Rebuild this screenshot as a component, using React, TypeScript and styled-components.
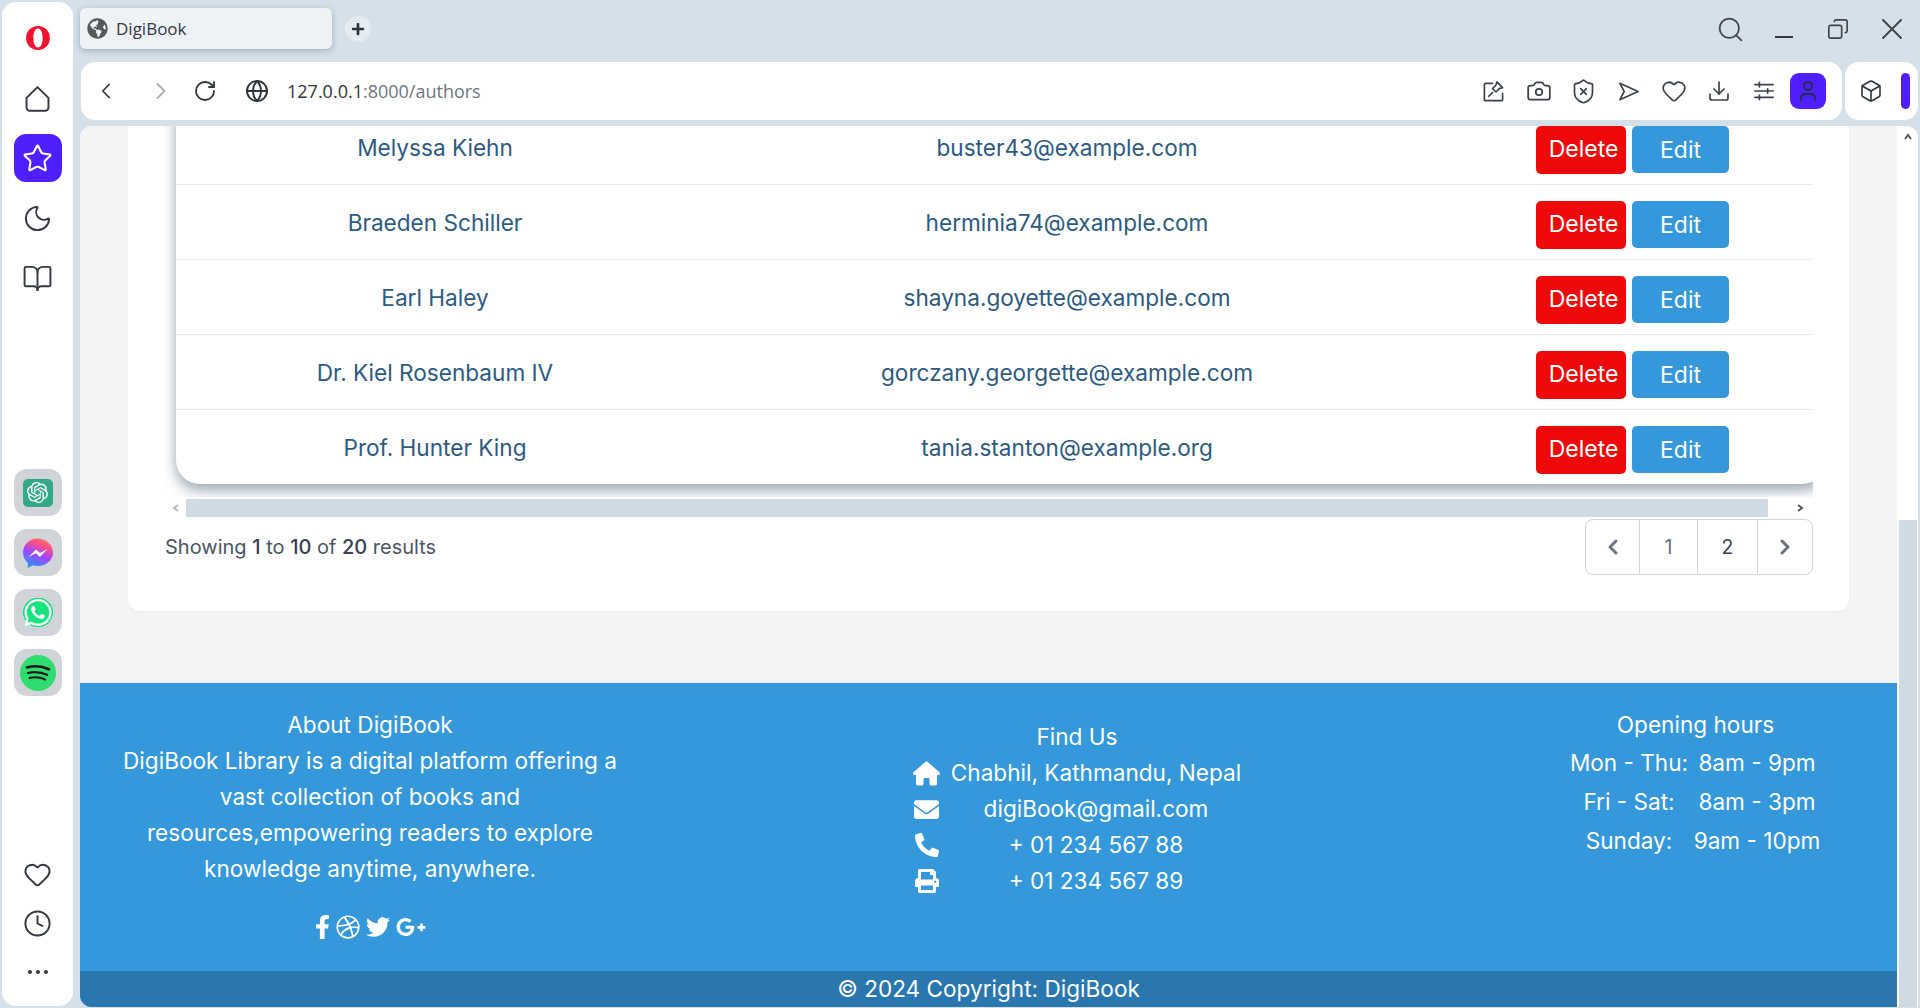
import styled, { createGlobalStyle } from 'styled-components';
import {
  Box,
  BookOpen,
  Camera,
  ChevronLeft,
  ChevronRight,
  Clock,
  Copy,
  Download,
  Globe,
  Heart,
  Moon,
  RotateCw,
  Search,
  ShieldX,
  Star,
  User,
  X,
} from 'lucide-react';
import {
  FaDribbble,
  FaEnvelope,
  FaFacebookF,
  FaGlobeAmericas,
  FaGooglePlusG,
  FaPhoneAlt,
  FaPlus,
  FaPrint,
  FaTwitter,
  FaWhatsapp,
} from 'react-icons/fa';
import { FaHouse } from 'react-icons/fa6';
import { SiOpenai } from 'react-icons/si';

const authors = [
  { name: 'Melyssa Kiehn', email: 'buster43@example.com' },
  { name: 'Braeden Schiller', email: 'herminia74@example.com' },
  { name: 'Earl Haley', email: 'shayna.goyette@example.com' },
  { name: 'Dr. Kiel Rosenbaum IV', email: 'gorczany.georgette@example.com' },
  { name: 'Prof. Hunter King', email: 'tania.stanton@example.org' },
];

const GlobalStyle = createGlobalStyle`
  html, body {
    margin: 0;
    padding: 0;
    height: 100%;
    overflow: hidden;
    background: #d6e0e9;
  }
  * { box-sizing: border-box; }
`;

const Shell = styled.div`
  width: 1920px;
  height: 1008px;
  display: flex;
  overflow: hidden;
  background: #d6e0e9;
  font-family: Inter, "Noto Sans", sans-serif;
`;

const Sidebar = styled.aside`
  width: 71px;
  margin: 2px 7px 2px 2px;
  flex: none;
  background: #fff;
  border-radius: 14px;
  display: flex;
  flex-direction: column;
  align-items: center;
  padding-top: 12px;
`;

const SideGroup = styled.div`
  display: flex;
  flex-direction: column;
  gap: 12px;
`;

const AppGroup = styled(SideGroup)`
  margin-top: 167px;
  gap: 13px;
`;

const BottomGroup = styled.div`
  margin-top: auto;
  padding-bottom: 10px;
  display: flex;
  flex-direction: column;
  gap: 1px;
`;

const SideButton = styled.div<{ $active?: boolean }>`
  width: 48px;
  height: 48px;
  display: flex;
  align-items: center;
  justify-content: center;
  border-radius: 12px;
  color: ${(p) => (p.$active ? '#fff' : '#33393f')};
  background: ${(p) => (p.$active ? '#4f1fff' : 'transparent')};
`;

const AppTile = styled.div`
  width: 48px;
  height: 47px;
  display: flex;
  align-items: center;
  justify-content: center;
  border-radius: 13px;
  background: #d0d4d8;
`;

const GptBadge = styled.div`
  width: 30px;
  height: 28px;
  border-radius: 5px;
  background: #34a98a;
  color: #fff;
  display: flex;
  align-items: center;
  justify-content: center;
`;

const WhatsappBadge = styled.div`
  width: 30px;
  height: 30px;
  color: #fff;
  display: flex;
  align-items: center;
  justify-content: center;
  background: radial-gradient(circle at 50% 48%, #16e47f 0 68%, transparent 70%);
`;

const Main = styled.div`
  flex: 1;
  min-width: 0;
  display: flex;
  flex-direction: column;
`;

const TabStrip = styled.div`
  height: 62px;
  flex: none;
  display: flex;
  align-items: flex-start;
  padding-top: 8px;
`;

const Tab = styled.div`
  width: 252px;
  height: 41px;
  display: flex;
  align-items: center;
  gap: 8px;
  padding-left: 7px;
  border-radius: 6px;
  background: #eef2f7;
  box-shadow: 0 2px 6px rgba(60, 80, 100, 0.35);
  color: #33393f;
  font-family: "Open Sans", sans-serif;
  font-size: 17px;
`;

const NewTab = styled.div`
  width: 26px;
  height: 26px;
  margin: 8px 0 0 13px;
  border-radius: 50%;
  background: #e4ebf1;
  color: #2d3338;
  display: flex;
  align-items: center;
  justify-content: center;
`;

const WindowControls = styled.div`
  margin-left: auto;
  margin-right: 1px;
  display: flex;
  height: 42px;
  align-items: center;
  color: #3f454b;
`;

const WindowButton = styled.div`
  width: 54px;
  display: flex;
  justify-content: center;
`;

const MinimizeBar = styled.div`
  width: 18px;
  height: 2px;
  margin-top: 16px;
  background: #33393f;
`;

const ToolRow = styled.div`
  height: 58px;
  flex: none;
  display: flex;
  gap: 3px;
  margin-bottom: 6px;
`;

const AddressBar = styled.div`
  width: 1761px;
  margin-left: 1px;
  display: flex;
  align-items: center;
  background: #fff;
  border-radius: 14px;
  padding-left: 12px;
  color: #2f353b;
`;

const NavButton = styled.div<{ $w: number; $ml?: number; $dim?: boolean }>`
  width: ${(p) => p.$w}px;
  margin-left: ${(p) => p.$ml ?? 0}px;
  flex: none;
  display: flex;
  justify-content: center;
  color: ${(p) => (p.$dim ? '#a9aeb3' : '#2f353b')};
`;

const Url = styled.div`
  margin-left: 10px;
  font-family: "Open Sans", sans-serif;
  font-size: 18px;
  color: #2f353b;
  span {
    color: #6d7680;
  }
`;

const ToolIcons = styled.div`
  margin-left: auto;
  display: flex;
  align-items: center;
  padding-right: 16px;
  color: #3a4148;
`;

const ToolIcon = styled.div`
  width: 45px;
  display: flex;
  justify-content: center;
`;

const Avatar = styled.div`
  width: 36px;
  height: 36px;
  margin-left: 4px;
  border-radius: 9px;
  background: #4f1fff;
  color: #2a2d4a;
  display: flex;
  align-items: center;
  justify-content: center;
`;

const ExtBar = styled.div`
  width: 73px;
  display: flex;
  align-items: center;
  justify-content: space-between;
  background: #fff;
  border-radius: 14px;
  padding: 0 8px 0 14px;
  color: #2f353b;
`;

const AccentPill = styled.div`
  width: 9px;
  height: 36px;
  border-radius: 5px;
  background: #4f1fff;
`;

const Viewport = styled.div`
  flex: 1;
  min-height: 0;
  margin-bottom: 1px;
  margin-right: 2px;
  display: flex;
  overflow: hidden;
  border-radius: 12px 12px 0 12px;
  background: #fff;
`;

const Page = styled.div`
  flex: 1;
  min-width: 0;
  display: flex;
  flex-direction: column;
  overflow: hidden;
  background: #f3f4f6;
`;

const PageScrollbar = styled.div`
  width: 21px;
  flex: none;
  display: flex;
  flex-direction: column;
  align-items: center;
  background: #fff;
  color: #555;
`;

const ScrollUp = styled.div`
  height: 394px;
  width: 100%;
  display: flex;
  justify-content: center;
  padding-top: 6px;
`;

const ScrollThumb = styled.div`
  width: 18px;
  flex: 1;
  background: #d0dae3;
`;

const Card = styled.section`
  margin: 0 48px;
  padding: 0 36px 36px 37px;
  height: 485px;
  flex: none;
  background: #fff;
  border-radius: 0 0 12px 12px;
  box-shadow: 0 1px 2px rgba(0, 0, 0, 0.04);
`;

const TableScroll = styled.div`
  height: 371px;
  overflow: hidden;
  padding-left: 11px;
`;

const Table = styled.div`
  width: 1650px;
  margin-top: -16px;
  background: #fff;
  border-radius: 0 0 24px 24px;
  box-shadow: 0 6px 14px rgba(50, 75, 100, 0.5);
  color: #2c5a80;
  font-size: 22.6px;
`;

const Row = styled.div`
  height: 75px;
  display: grid;
  grid-template-columns: 518px 746px 1fr;
  align-items: center;
  border-bottom: 1px solid #e5e7eb;
  &:last-child {
    border-bottom: 0;
    height: 74px;
  }
`;

const Cell = styled.div`
  text-align: center;
`;

const Actions = styled.div`
  display: flex;
  gap: 6px;
  padding: 16px 0 0 96px;
  align-self: start;
  align-items: flex-start;
`;

const ActionButton = styled.button<{ $kind: 'delete' | 'edit' }>`
  border: 0;
  padding: ${(p) => (p.$kind === 'delete' ? '0 0 2px 5px' : '0')};
  color: #fff;
  font: inherit;
  font-size: 23px;
  border-radius: 5px;
  width: ${(p) => (p.$kind === 'delete' ? 90 : 97)}px;
  height: ${(p) => (p.$kind === 'delete' ? 48 : 47)}px;
  background: ${(p) => (p.$kind === 'delete' ? '#ee0a0a' : '#3498db')};
`;

const HScrollbar = styled.div`
  height: 18px;
  margin-top: 2px;
  display: flex;
  align-items: center;
  color: #777;
`;

const HArrow = styled.div<{ $w: number }>`
  width: ${(p) => p.$w}px;
  flex: none;
  display: flex;
  justify-content: center;
`;

const HThumb = styled.div`
  width: 1582px;
  height: 18px;
  flex: none;
  background: #d0dae3;
`;

const ListFooter = styled.div`
  margin-top: 2px;
  display: flex;
  justify-content: space-between;
  align-items: center;
`;

const Summary = styled.p`
  margin: 0;
  font-size: 20px;
  color: #4b5563;
  b {
    font-weight: 500;
    color: #374151;
  }
`;

const Pager = styled.nav`
  width: 228px;
  height: 56px;
  display: flex;
  border: 1px solid #d1d5db;
  border-radius: 8px;
  overflow: hidden;
`;

const PagerItem = styled.div<{ $w: number; $current?: boolean }>`
  width: ${(p) => p.$w}px;
  display: flex;
  align-items: center;
  justify-content: center;
  font-size: 19.5px;
  color: ${(p) => (p.$current ? '#374151' : '#6b7280')};
  border-right: 1px solid #d1d5db;
  &:last-child {
    border-right: 0;
  }
`;

const Footer = styled.footer`
  margin-top: 72px;
  flex: 1;
  display: flex;
  flex-direction: column;
  background: #3498db;
  color: #fff;
  font-size: 22.6px;
  line-height: 36px;
`;

const FooterColumns = styled.div`
  height: 288px;
  display: grid;
  grid-template-columns: 580px 834px 403px;
`;

const AboutCol = styled.div`
  padding: 24px 30px 0;
  text-align: center;
`;

const FindCol = styled.div`
  padding-top: 36px;
  display: flex;
  flex-direction: column;
  align-items: center;
`;

const FindList = styled.div`
  width: 329px;
`;

const FindTitle = styled.div`
  text-align: center;
`;

const FindRow = styled.div`
  display: grid;
  grid-template-columns: 28px 1fr;
  column-gap: 10px;
  align-items: center;
  text-align: center;
  svg {
    display: block;
    margin: 0 auto;
  }
`;

const Socials = styled.div`
  margin-top: 25px;
  display: flex;
  justify-content: center;
  align-items: center;
  gap: 6px;
  svg:first-child {
    width: 15px;
  }
`;

const HoursCol = styled.div`
  padding-top: 24px;
  text-align: center;
`;

const HoursGrid = styled.div`
  display: grid;
  grid-template-columns: 120px 130px;
  justify-content: center;
  column-gap: 3px;
  line-height: 39px;
`;

const CopyBar = styled.div`
  height: 36px;
  line-height: 36px;
  text-align: center;
  background: #2977ae;
`;

function OperaLogo() {
  return (
    <svg width="26" height="26" viewBox="0 0 24 24">
      <path
        fill="#f5122d"
        fillRule="evenodd"
        d="M12 1C5.600 1 1 5.900 1 12s4.600 11 11 11 11-4.900 11-11S18.400 1 12 1zm0 2.200c2.700 0 4.300 4 4.300 8.800s-1.600 8.800-4.300 8.800S7.700 16.800 7.700 12 9.300 3.200 12 3.200z"
      />
    </svg>
  );
}

function HomeGlyph() {
  return (
    <svg width="31" height="31" viewBox="0 0 24 24" fill="none" stroke="currentColor" strokeWidth="1.500" strokeLinejoin="round">
      <path d="M3.500 11.500 12 3.200l8.500 8.300V19a2.500 2.500 0 0 1-2.500 2.500H6A2.500 2.500 0 0 1 3.500 19z" />
    </svg>
  );
}

function MessengerLogo() {
  return (
    <svg width="32" height="32" viewBox="0 0 32 32">
      <defs>
        <linearGradient id="msgr" x1="0.300" y1="1" x2="0.700" y2="0">
          <stop offset="0" stopColor="#1e9bff" />
          <stop offset="0.450" stopColor="#a144ff" />
          <stop offset="0.800" stopColor="#ff4f7f" />
          <stop offset="1" stopColor="#ff7a5c" />
        </linearGradient>
      </defs>
      <path
        fill="url(#msgr)"
        d="M16 1.500C7.700 1.500 1 7.600 1 15.500c0 4.100 1.800 7.700 4.800 10.200V31l5-2.700c1.600.5 3.300.7 5.200.7 8.300 0 15-6 15-13.500S24.300 1.500 16 1.500z"
      />
      <path fill="#fff" d="M6.500 20 14 12.400l4 3.600 7.500-4-7.600 8-4-3.800z" />
    </svg>
  );
}

function SpotifyLogo() {
  return (
    <svg width="36" height="36" viewBox="0 0 36 36" fill="none">
      <circle cx="18" cy="18" r="18" fill="#2fdc6e" />
      <g stroke="#16181a" strokeLinecap="round">
        <path strokeWidth="2.600" d="M7 12.500c7-2 15-1.500 22 1.800" />
        <path strokeWidth="2.300" d="M8 18c6-1.600 13-1 19 1.800" />
        <path strokeWidth="2" d="M9.500 23c5-1.200 11-.8 15.500 1.500" />
      </g>
    </svg>
  );
}

function SnapIcon() {
  return (
    <svg width="23" height="23" viewBox="0 0 24 24" fill="none" stroke="currentColor" strokeWidth="1.700" strokeLinecap="round" strokeLinejoin="round">
      <path d="M11 3.500H4a1.500 1.500 0 0 0-1.500 1.500v16.500h18a1 1 0 0 0 1-1V14" />
      <path d="m15.500 2 6 6-3.500 1-3.500 3.500-3.500-3.500L14.500 5.500z" />
      <path d="M7 17l4-4" />
    </svg>
  );
}

function SendIcon() {
  return (
    <svg width="23" height="23" viewBox="0 0 24 24" fill="none" stroke="currentColor" strokeWidth="1.700" strokeLinejoin="round">
      <path d="M3 3.500 22 12 3 20.500 7.500 12z" />
    </svg>
  );
}

function MixerIcon() {
  return (
    <svg width="22" height="22" viewBox="0 0 24 24" fill="none" stroke="currentColor" strokeWidth="1.800" strokeLinecap="round">
      <path d="M2 5h20M2 12h20M2 19h20" />
      <path d="M7 2.500v5M16 9.500v5M7 16.500v5" />
    </svg>
  );
}

function ScrollChevron({ dir, color }: { dir: 'left' | 'right' | 'up'; color: string }) {
  const d = { left: 'M7 2 3 5l4 3', right: 'M3 2l4 3-4 3', up: 'M2 7l3-4 3 4' }[dir];
  return (
    <svg width="10" height="10" viewBox="0 0 10 10" fill="none" stroke={color} strokeWidth="2">
      <path d={d} />
    </svg>
  );
}

export default function App() {
  return (
    <>
      <GlobalStyle />
      <Shell>
        <Sidebar>
          <SideGroup>
            <SideButton>
              <OperaLogo />
            </SideButton>
            <SideButton>
              <HomeGlyph />
            </SideButton>
            <SideButton $active>
              <Star size={31} strokeWidth={1.6} />
            </SideButton>
            <SideButton>
              <Moon size={31} strokeWidth={1.5} />
            </SideButton>
            <SideButton>
              <BookOpen size={31} strokeWidth={1.5} />
            </SideButton>
          </SideGroup>
          <AppGroup>
            <AppTile>
              <GptBadge>
                <SiOpenai size={21} />
              </GptBadge>
            </AppTile>
            <AppTile>
              <MessengerLogo />
            </AppTile>
            <AppTile>
              <WhatsappBadge>
                <FaWhatsapp size={31} />
              </WhatsappBadge>
            </AppTile>
            <AppTile>
              <SpotifyLogo />
            </AppTile>
          </AppGroup>
          <BottomGroup>
            <SideButton>
              <Heart size={29} strokeWidth={1.6} />
            </SideButton>
            <SideButton>
              <Clock size={29} strokeWidth={1.6} />
            </SideButton>
            <SideButton>
              <svg width="22" height="6" viewBox="0 0 22 6" fill="currentColor">
                <circle cx="3" cy="3" r="2" />
                <circle cx="11" cy="3" r="2" />
                <circle cx="19" cy="3" r="2" />
              </svg>
            </SideButton>
          </BottomGroup>
        </Sidebar>

        <Main>
          <TabStrip>
            <Tab>
              <FaGlobeAmericas size={21} color="#55595e" />
              DigiBook
            </Tab>
            <NewTab>
              <FaPlus size={14} />
            </NewTab>
            <WindowControls>
              <WindowButton>
                <Search size={29} strokeWidth={1.5} />
              </WindowButton>
              <WindowButton>
                <MinimizeBar />
              </WindowButton>
              <WindowButton>
                <Copy size={22} strokeWidth={1.8} style={{ transform: 'scaleX(-1)' }} />
              </WindowButton>
              <WindowButton>
                <X size={36} strokeWidth={1.3} />
              </WindowButton>
            </WindowControls>
          </TabStrip>

          <ToolRow>
            <AddressBar>
              <NavButton $w={26}>
                <ChevronLeft size={28} strokeWidth={1.6} />
              </NavButton>
              <NavButton $w={40} $ml={22} $dim>
                <ChevronRight size={28} strokeWidth={1.6} />
              </NavButton>
              <NavButton $w={40} $ml={4}>
                <RotateCw size={24} strokeWidth={1.8} />
              </NavButton>
              <NavButton $w={40} $ml={12}>
                <Globe size={24} strokeWidth={1.9} />
              </NavButton>
              <Url>
                127.0.0.1<span>:8000/authors</span>
              </Url>
              <ToolIcons>
                <ToolIcon>
                  <SnapIcon />
                </ToolIcon>
                <ToolIcon>
                  <Camera size={26} strokeWidth={1.6} />
                </ToolIcon>
                <ToolIcon>
                  <ShieldX size={27} strokeWidth={1.5} />
                </ToolIcon>
                <ToolIcon>
                  <SendIcon />
                </ToolIcon>
                <ToolIcon>
                  <Heart size={26} strokeWidth={1.6} />
                </ToolIcon>
                <ToolIcon>
                  <Download size={24} strokeWidth={1.7} />
                </ToolIcon>
                <ToolIcon>
                  <MixerIcon />
                </ToolIcon>
                <Avatar>
                  <User size={24} strokeWidth={1.9} />
                </Avatar>
              </ToolIcons>
            </AddressBar>
            <ExtBar>
              <Box size={24} strokeWidth={1.6} />
              <AccentPill />
            </ExtBar>
          </ToolRow>

          <Viewport>
            <Page>
              <Card>
                <TableScroll>
                  <Table>
                    {authors.map((a) => (
                      <Row key={a.email}>
                        <Cell>{a.name}</Cell>
                        <Cell>{a.email}</Cell>
                        <Actions>
                          <ActionButton $kind="delete">Delete</ActionButton>
                          <ActionButton $kind="edit">Edit</ActionButton>
                        </Actions>
                      </Row>
                    ))}
                  </Table>
                </TableScroll>
                <HScrollbar>
                  <HArrow $w={21}>
                    <ScrollChevron dir="left" color="#bbb" />
                  </HArrow>
                  <HThumb />
                  <HArrow $w={64}>
                    <ScrollChevron dir="right" color="#555" />
                  </HArrow>
                </HScrollbar>
                <ListFooter>
                  <Summary>
                    Showing <b>1</b> to <b>10</b> of <b>20</b> results
                  </Summary>
                  <Pager>
                    <PagerItem $w={54}>
                      <ChevronLeft size={24} strokeWidth={3} />
                    </PagerItem>
                    <PagerItem $w={58}>1</PagerItem>
                    <PagerItem $w={60} $current>
                      2
                    </PagerItem>
                    <PagerItem $w={54}>
                      <ChevronRight size={24} strokeWidth={3} />
                    </PagerItem>
                  </Pager>
                </ListFooter>
              </Card>

              <Footer>
                <FooterColumns>
                  <AboutCol>
                    About DigiBook
                    <br />
                    DigiBook Library is a digital platform offering a
                    <br />
                    vast collection of books and
                    <br />
                    resources,empowering readers to explore
                    <br />
                    knowledge anytime, anywhere.
                    <Socials>
                      <FaFacebookF size={24} />
                      <FaDribbble size={24} />
                      <FaTwitter size={24} />
                      <FaGooglePlusG size={30} />
                    </Socials>
                  </AboutCol>
                  <FindCol>
                    <FindList>
                      <FindTitle>Find Us</FindTitle>
                      <FindRow>
                        <FaHouse size={27} />
                        <span>Chabhil, Kathmandu, Nepal</span>
                      </FindRow>
                      <FindRow>
                        <FaEnvelope size={25} />
                        <span>digiBook@gmail.com</span>
                      </FindRow>
                      <FindRow>
                        <FaPhoneAlt size={24} />
                        <span>+ 01 234 567 88</span>
                      </FindRow>
                      <FindRow>
                        <FaPrint size={24} />
                        <span>+ 01 234 567 89</span>
                      </FindRow>
                    </FindList>
                  </FindCol>
                  <HoursCol>
                    Opening hours
                    <HoursGrid>
                      <span>Mon - Thu:</span>
                      <span>8am - 9pm</span>
                      <span>Fri - Sat:</span>
                      <span>8am - 3pm</span>
                      <span>Sunday:</span>
                      <span>9am - 10pm</span>
                    </HoursGrid>
                  </HoursCol>
                </FooterColumns>
                <CopyBar>© 2024 Copyright: DigiBook</CopyBar>
              </Footer>
            </Page>
            <PageScrollbar>
              <ScrollUp>
                <ScrollChevron dir="up" color="#555" />
              </ScrollUp>
              <ScrollThumb />
            </PageScrollbar>
          </Viewport>
        </Main>
      </Shell>
    </>
  );
}
